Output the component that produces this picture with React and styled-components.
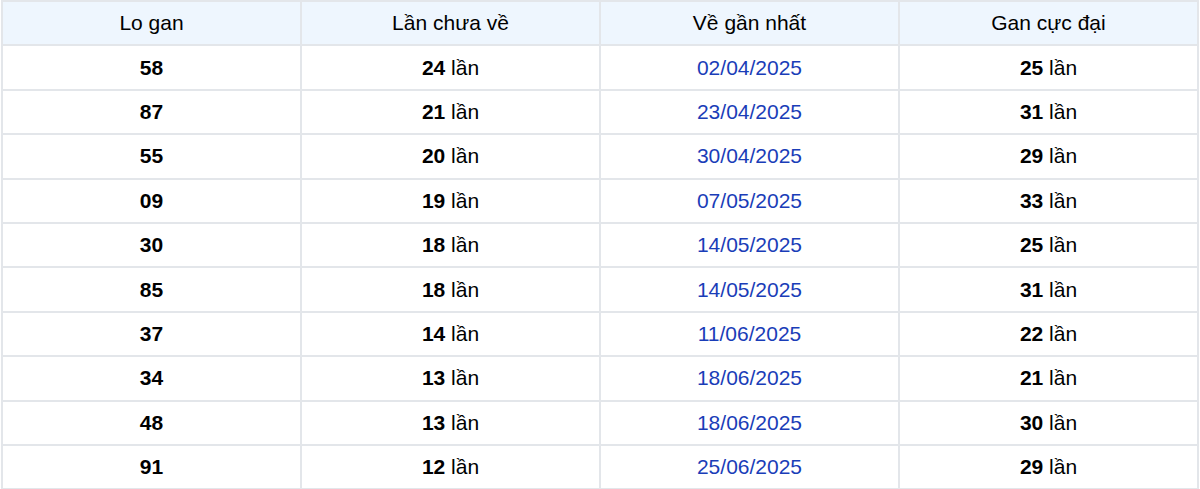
import React from "react";
import styled, { createGlobalStyle } from "styled-components";

const Global = createGlobalStyle`
  html, body { margin: 0; padding: 0; background: #fff; }
  body { font-family: "Liberation Sans", Arial, sans-serif; }
`;

const Table = styled.table`
  width: 1198px;
  margin: 0 1px;
  border-collapse: collapse;
  table-layout: fixed;
  font-size: 21px;
  color: #000;
`;

const Th = styled.th`
  height: 42.4px;
  padding: 0;
  font-weight: normal;
  background: #eef6fe;
  border: 2px solid #e3e6ea;
  text-align: center;
  vertical-align: middle;
`;

const Td = styled.td`
  height: 42.4px;
  padding: 0;
  border: 2px solid #e3e6ea;
  text-align: center;
  vertical-align: middle;
  color: ${(p) => (p.$blue ? "#1a3db8" : "#000")};
`;

const B = styled.b`
  font-weight: bold;
`;

const rows = [
  ["58", "24", "02/04/2025", "25"],
  ["87", "21", "23/04/2025", "31"],
  ["55", "20", "30/04/2025", "29"],
  ["09", "19", "07/05/2025", "33"],
  ["30", "18", "14/05/2025", "25"],
  ["85", "18", "14/05/2025", "31"],
  ["37", "14", "11/06/2025", "22"],
  ["34", "13", "18/06/2025", "21"],
  ["48", "13", "18/06/2025", "30"],
  ["91", "12", "25/06/2025", "29"],
];

export default function App() {
  return (
    <>
      <Global />
      <Table>
        <thead>
          <tr>
            <Th>Lo gan</Th>
            <Th>Lần chưa về</Th>
            <Th>Về gần nhất</Th>
            <Th>Gan cực đại</Th>
          </tr>
        </thead>
        <tbody>
          {rows.map((r, i) => (
            <tr key={i}>
              <Td><B>{r[0]}</B></Td>
              <Td><B>{r[1]}</B> lần</Td>
              <Td $blue>{r[2]}</Td>
              <Td><B>{r[3]}</B> lần</Td>
            </tr>
          ))}
        </tbody>
      </Table>
    </>
  );
}
